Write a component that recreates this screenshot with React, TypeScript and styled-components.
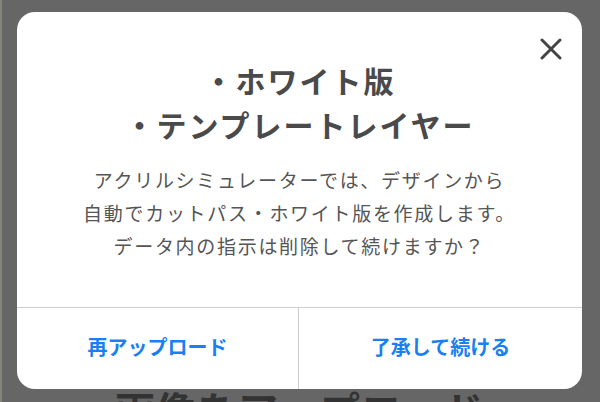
import React from 'react';
import styled, { createGlobalStyle } from 'styled-components';

const GlobalStyle = createGlobalStyle`
  html, body {
    margin: 0;
    padding: 0;
    background: #666666;
  }
  body {
    font-family: "Noto Sans CJK JP", "Noto Sans", sans-serif;
  }
`;

const Screen = styled.div`
  width: 600px;
  height: 402px;
  box-sizing: border-box;
  overflow: hidden;
  background: #666666;
  border-left: 2px solid #85837a;
  padding: 12px 18px 0 15px;
  display: flex;
  flex-direction: column;
  align-items: stretch;
`;

const Dialog = styled.div`
  position: relative;
  flex-shrink: 0;
  height: 377px;
  background: #ffffff;
  border-radius: 18px;
  display: flex;
  flex-direction: column;
  overflow: hidden;
`;

const CloseButton = styled.button`
  position: absolute;
  top: 21px;
  right: 15px;
  width: 32px;
  height: 32px;
  padding: 0;
  border: none;
  background: transparent;
  display: flex;
  align-items: center;
  justify-content: center;
  cursor: pointer;
`;

const Body = styled.div`
  flex: 1;
  display: flex;
  flex-direction: column;
  align-items: center;
  padding-top: 46px;
`;

const Title = styled.h2`
  margin: 0;
  font-size: 30px;
  font-weight: 700;
  line-height: 44px;
  letter-spacing: 2px;
  color: #4a4a4a;
  text-align: center;
`;

const Message = styled.p`
  margin: 17px 0 0;
  font-size: 19px;
  font-weight: 400;
  line-height: 33px;
  letter-spacing: 1.7px;
  color: #555555;
  text-align: center;
`;

const Actions = styled.div`
  height: 81px;
  flex-shrink: 0;
  border-top: 1px solid #cccccc;
  display: grid;
  grid-template-columns: 282px 1fr;
`;

const ActionButton = styled.button<{ $divider?: boolean }>`
  border: none;
  border-right: ${(p) => (p.$divider ? '1px solid #cccccc' : 'none')};
  background: transparent;
  font-family: "Noto Sans CJK JP", "Noto Sans", sans-serif;
  font-size: 20px;
  font-weight: 700;
  color: #1a7ff0;
  display: flex;
  align-items: center;
  justify-content: center;
  padding: 0 0 4px;
  cursor: pointer;
`;

const PageHeading = styled.h1`
  flex-shrink: 0;
  margin: 0;
  font-size: 40px;
  font-weight: 700;
  line-height: 40px;
  letter-spacing: 1px;
  color: #333333;
  text-align: center;
`;

const CloseIcon = () => (
  <svg width="22" height="22" viewBox="0 0 22 22">
    <path d="M2 2 L20 20 M20 2 L2 20" stroke="#444" strokeWidth="3" strokeLinecap="round" />
  </svg>
);

export default function App() {
  return (
    <>
      <GlobalStyle />
      <Screen>
        <Dialog>
          <CloseButton aria-label="閉じる">
            <CloseIcon />
          </CloseButton>
          <Body>
            <Title>
              ・ホワイト版
              <br />
              ・テンプレートレイヤー
            </Title>
            <Message>
              アクリルシミュレーターでは、デザインから
              <br />
              自動でカットパス・ホワイト版を作成します。
              <br />
              データ内の指示は削除して続けますか？
            </Message>
          </Body>
          <Actions>
            <ActionButton $divider>再アップロード</ActionButton>
            <ActionButton>了承して続ける</ActionButton>
          </Actions>
        </Dialog>
        <PageHeading>画像をアップロード</PageHeading>
      </Screen>
    </>
  );
}
